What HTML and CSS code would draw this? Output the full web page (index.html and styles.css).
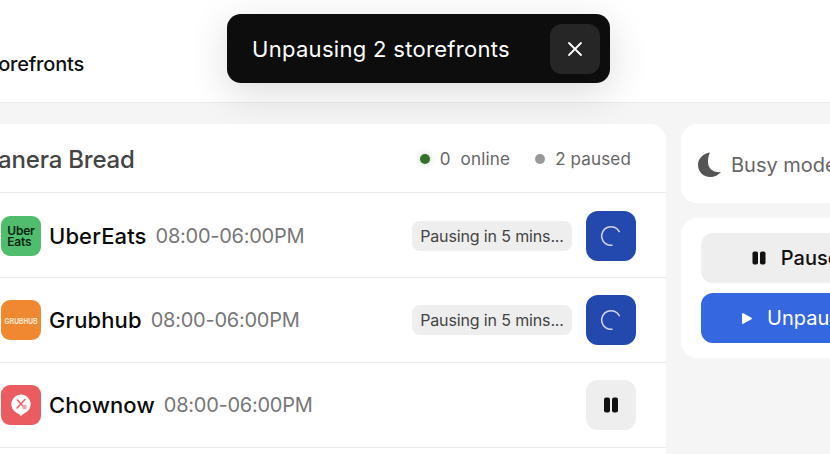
FILE: index.html
```html
<!DOCTYPE html>
<html lang="en">
<head>
<meta charset="utf-8">
<title>Storefronts</title>
<link rel="stylesheet" href="styles.css">
</head>
<body>
<div class="page">
  <header class="topbar"><h1 class="page-title">Storefronts</h1></header>
  <main class="content">
    <section class="card stores">
      <div class="stores-head">
        <h2 class="brand">Panera Bread</h2>
        <div class="stats">
          <span class="dot dot-green"></span><span class="stat stat-online">0&nbsp; online</span>
          <span class="dot dot-gray"></span><span class="stat">2 paused</span>
        </div>
      </div>
      <div class="row">
        <div class="logo logo-uber"><span>Uber<br>Eats</span></div>
        <span class="name">UberEats</span><span class="hours">08:00-06:00PM</span>
        <span class="pill">Pausing in 5 mins...</span>
        <button class="action action-busy" aria-label="Loading"><svg width="24" height="24" viewBox="0 0 24 24" fill="none"><path d="M20.300 7.700A9.350 9.350 0 1 0 13 21.300" stroke="#d5d8e2" stroke-width="1.500" stroke-linecap="round"/></svg></button>
      </div>
      <div class="row">
        <div class="logo logo-grub"><span class="grub-mark">GRUBHUB</span></div>
        <span class="name">Grubhub</span><span class="hours">08:00-06:00PM</span>
        <span class="pill">Pausing in 5 mins...</span>
        <button class="action action-busy" aria-label="Loading"><svg width="24" height="24" viewBox="0 0 24 24" fill="none"><path d="M20.300 7.700A9.350 9.350 0 1 0 13 21.300" stroke="#d5d8e2" stroke-width="1.500" stroke-linecap="round"/></svg></button>
      </div>
      <div class="row">
        <div class="logo logo-chow"><svg width="24" height="26" viewBox="0 0 24 26"><path d="M12 2.500a9.700 9.700 0 0 1 4.100 18.500c-1.700.8-3 1.800-4.100 3-1.100-1.200-2.400-2.200-4.100-3A9.700 9.700 0 0 1 12 2.500z" fill="#fff"/><path d="M8.300 8l7.500 8M16 7.500l-8 8.500" stroke="#ea5c5f" stroke-width="1.500" stroke-linecap="round"/><circle cx="15.500" cy="15" r="2.300" fill="#f3a0a2"/></svg></div>
        <span class="name">Chownow</span><span class="hours">08:00-06:00PM</span>
        <button class="action action-pause" aria-label="Pause"><svg width="16" height="16" viewBox="0 0 16 16" fill="#111"><rect x="1" y="0.500" width="6" height="15" rx="2"/><rect x="9" y="0.500" width="6" height="15" rx="2"/></svg></button>
      </div>
    </section>
    <aside class="side">
      <div class="card busy">
        <svg class="moon" width="24" height="25" viewBox="0 0 24 25"><path d="M12 .5C5 1.500 0 6.500 0 13c0 6.800 5.300 12 12 12 4.500 0 8.500-2 11-5-7 1-13-3-13-10 0-3.500.5-7 2-9.500z" fill="#555"/></svg>
        <span class="busy-label">Busy mode</span>
      </div>
      <div class="card bulk">
        <button class="bulk-btn bulk-pause"><svg width="14" height="14" viewBox="0 0 14 14" fill="#111"><rect x="0.500" y="0.500" width="5.500" height="13" rx="1.800"/><rect x="8" y="0.500" width="5.500" height="13" rx="1.800"/></svg>Pause all</button>
        <button class="bulk-btn bulk-unpause"><svg width="10" height="11" viewBox="0 0 10 11" fill="#fff"><path d="M0 1v9c0 .8.700 1.200 1.300.8l8.200-4.500c.6-.3.600-1.200 0-1.600L1.300.2C.7-.2 0 .2 0 1z"/></svg>Unpause all</button>
      </div>
    </aside>
  </main>
  <div class="toast" role="status">
    <span class="toast-text">Unpausing 2 storefronts</span>
    <button class="toast-close" aria-label="Close"><svg width="16" height="16" viewBox="0 0 16 16" fill="none" stroke="#fff" stroke-width="1.800" stroke-linecap="round"><path d="M2 2l12 12M14 2L2 14"/></svg></button>
  </div>
</div>
</body>
</html>
```
FILE: styles.css
```css
* { box-sizing: border-box; }
html, body { margin: 0; padding: 0; }
body { font-family: Inter, "Liberation Sans", sans-serif; background: #f5f5f5; }
button { font-family: inherit; border: 0; padding: 0; }
h1, h2 { margin: 0; font-weight: 500; }

.page { position: relative; width: 830px; height: 454px; overflow: hidden; background: #f5f5f5; }

.topbar { height: 103px; background: #fff; border-bottom: 1px solid #ebebeb; display: flex; align-items: flex-end; padding-bottom: 26px; margin-left: -21px; }
.page-title { font-size: 20px; line-height: 24px; color: #111; white-space: nowrap; letter-spacing: -0.2px; }

.content { display: flex; gap: 15px; margin-left: -20px; padding-top: 21px; align-items: flex-start; }
.card { background: #fff; border-radius: 16px; flex-shrink: 0; }
.stores { width: 686px; padding-bottom: 20px; }
.stores-head { height: 69.33px; padding: 0 35px 0 3px; display: flex; align-items: center; justify-content: space-between; border-bottom: 1px solid #ebebeb; }
.brand { font-size: 24px; line-height: 30px; color: #444; white-space: nowrap; letter-spacing: -0.2px; position: relative; top: 2px; }
.stats { display: flex; align-items: center; position: relative; top: 1px; }
.dot { width: 10px; height: 10px; border-radius: 50%; margin-right: 10px; }
.dot-green { background: #35702f; box-shadow: 0 0 6px rgba(53,112,47,.3); }
.dot-gray { background: #999; }
.stat { font-size: 17px; line-height: 22px; color: #666; letter-spacing: 0.15px; }
.stat-online { margin-right: 25px; letter-spacing: 0.2px; }

.row { height: 84.75px; padding: 1px 30px 0 21px; display: flex; align-items: center; border-bottom: 1px solid #ebebeb; }
.logo { width: 40px; height: 40px; border-radius: 9px; display: flex; align-items: center; justify-content: center; flex-shrink: 0; margin-right: 8px; }
.logo-uber { background: #4fbd6d; color: #0a2614; font-size: 12px; line-height: 11px; font-weight: 600; text-align: left; letter-spacing: -0.2px; }
.logo-grub { background: #f08832; color: #ffe9d4; font-family: "Liberation Sans", sans-serif; font-size: 6.500px; font-weight: 700; }
.grub-mark { transform: scaleY(1.3); }
.logo-chow { background: #ea5c5f; }
.name { font-size: 22px; line-height: 28px; font-weight: 500; color: #0b0b0b; margin-right: 9px; white-space: nowrap; letter-spacing: 0.12px; }
.hours { font-size: 20px; line-height: 28px; color: #777; white-space: nowrap; letter-spacing: -0.25px; }
.pill { margin-left: auto; margin-right: 14px; height: 30px; width: 160px; border-radius: 8px; background: #eee; color: #444; font-size: 16px; line-height: 30px; text-align: center; white-space: nowrap; letter-spacing: -0.14px; }
.action { width: 50px; height: 50px; border-radius: 12px; display: flex; align-items: center; justify-content: center; flex-shrink: 0; }
.action-busy { background: #2349ae; }
.action-pause { background: #eee; margin-left: auto; }

.side { display: flex; flex-direction: column; gap: 15px; flex-shrink: 0; }
.busy { width: 256px; height: 79px; padding: 0 17px; display: flex; align-items: center; gap: 9px; }
.moon { flex-shrink: 0; position: relative; top: 1px; }
.busy-label { font-size: 20px; line-height: 26px; color: #666; white-space: nowrap; position: relative; top: 1px; }
.bulk { width: 256px; height: 140px; padding: 15px 20px; display: flex; flex-direction: column; gap: 10px; }
.bulk-btn { height: 50px; width: 216px; border-radius: 12px; display: flex; align-items: center; justify-content: center; gap: 15px; font-size: 20px; font-weight: 500; white-space: nowrap; }
.bulk-pause { background: #eee; color: #111; }
.bulk-unpause { background: #3567e0; color: #fff; font-weight: 400; padding-left: 2px; }

.toast { position: absolute; left: 227px; top: 14px; width: 383px; height: 69px; border-radius: 14px; background: #0d0d0d; display: flex; align-items: center; justify-content: space-between; padding: 0 10px 0 25px; box-shadow: 0 10px 40px rgba(0,0,0,.14); }
.toast-text { color: #fff; font-size: 22px; line-height: 28px; white-space: nowrap; letter-spacing: 0.3px; }
.toast-close { width: 50px; height: 50px; border-radius: 12px; background: #262626; display: flex; align-items: center; justify-content: center; }
```
